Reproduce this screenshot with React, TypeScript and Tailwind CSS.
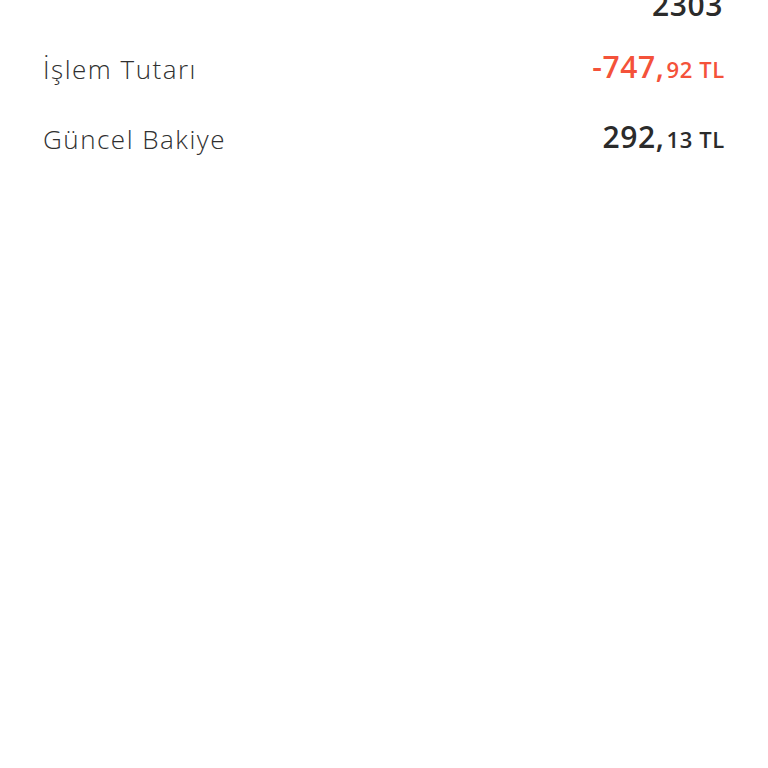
export default function App() {
    const rows = [
        {label: 'İşlem Tutarı', whole: '-747', cents: '92', negative: true},
        {label: 'Güncel Bakiye', whole: '292', cents: '13', negative: false},
    ];

    return (
        <div className="min-h-[768px] bg-white px-[43px] font-['Open_Sans',sans-serif]">
            {/* Previous row, scrolled past the top edge */}
            <div className="-mt-[20px] flex h-[40px] items-end justify-end">
                <span className="pr-[2px] text-[30px] font-semibold leading-none tracking-[0.02em] text-[#2b2b2b]">2303</span>
            </div>
            <div className="flex flex-col">
                {rows.map((row, i) => (
                    <div key={row.label}
                         className={`flex items-end justify-between pb-[2px] ${i === 0 ? 'h-[64px]' : 'h-[70px]'}`}>
                        <span className="text-[26px] font-light leading-none tracking-[1.5px] text-[#303030]">{row.label}</span>
                        <span
                            className={`text-[30px] font-semibold leading-none tracking-[0.02em] ${row.negative ? 'text-[#f4523a]' : 'text-[#2b2b2b]'}`}>
                            {row.whole},<span className="ml-[2px] text-[22px] tracking-[0.03em]">{row.cents} TL</span>
                        </span>
                    </div>
                ))}
            </div>
        </div>
    );
}
